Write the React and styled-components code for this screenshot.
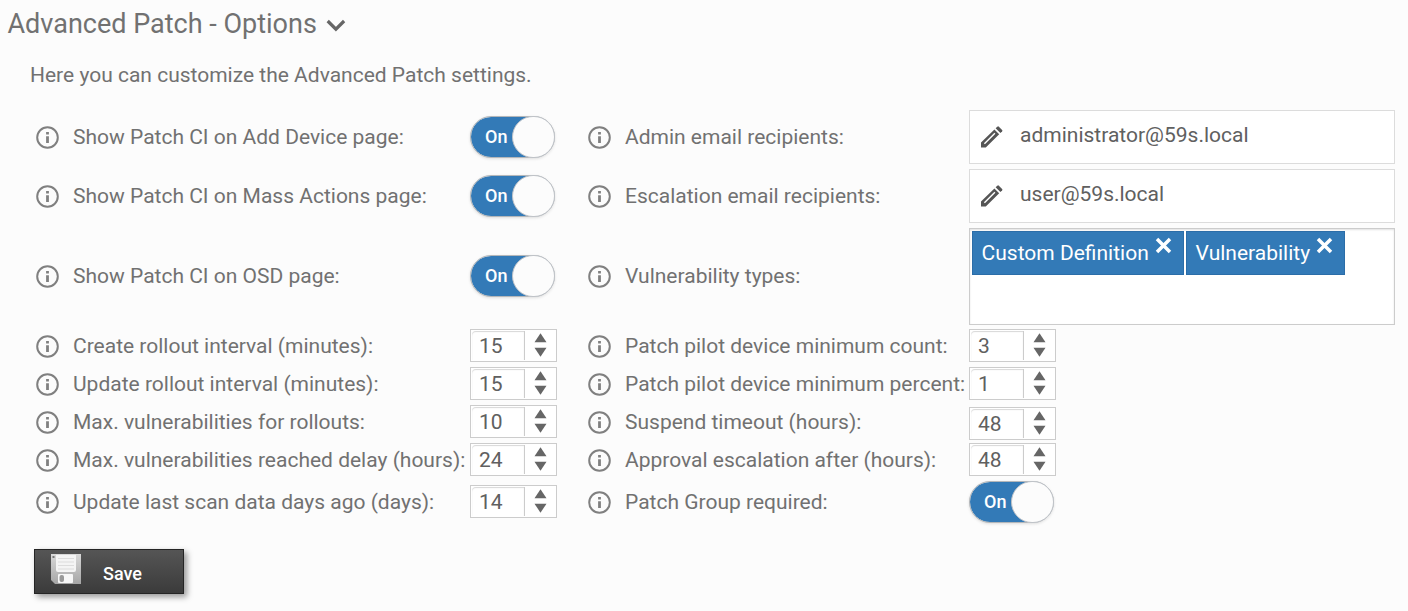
import React, { useState } from "react";
import styled, { createGlobalStyle } from "styled-components";

const GlobalStyle = createGlobalStyle`
  body {
    margin: 0;
    background: #fcfcfc;
    color: #717171;
    font-family: Roboto, "Liberation Sans", sans-serif;
    font-size: 21px;
  }
  * {
    box-sizing: border-box;
  }
`;

const Page = styled.main`
  height: 611px;
  overflow: hidden;
`;

const Title = styled.h1`
  display: flex;
  align-items: center;
  gap: 9px;
  margin: 0;
  padding: 8px 0 0 7.5px;
  font-size: 27px;
  line-height: 32px;
  font-weight: 400;

  svg {
    margin-top: 3px;
  }
`;

const Intro = styled.p`
  margin: 0;
  padding: 21px 0 0 30px;
  line-height: 28px;
  height: 70px;
`;

// two settings per line: icon + label + control, twice
const Options = styled.div`
  display: grid;
  grid-template-columns: 434px 118px 381px 426px;
  grid-template-rows: 54px 54px 96px repeat(4, 33px) 42px;
  row-gap: 5px;
  align-items: center;
  padding-left: 36px;
`;

const LabelCell = styled.div`
  display: flex;
  align-items: center;
  gap: 14px;
  white-space: nowrap;
  line-height: 24px;
`;

const Control = styled.div`
  display: flex;
  padding-top: ${props => props.$drop || 0}px;
`;

const InfoSvg = styled.svg`
  flex: none;
  width: 23px;
  height: 23px;
  margin-top: 1px;
`;

const ToggleTrack = styled.button`
  display: flex;
  align-items: center;
  justify-content: space-between;
  width: 85px;
  height: 42px;
  padding: 0 0 0 14px;
  border: 1px solid #b4b7ba;
  border-radius: 21px;
  background: ${props => (props.$on ? "#337ab7" : "#ddd")};
  background-clip: padding-box;
  box-shadow: 0 1px 3px rgba(0, 0, 0, 0.12);
  color: #fff;
  font-family: inherit;
  font-size: 18px;
  font-weight: 500;
`;

const ToggleText = styled.span`
  padding-bottom: 2px;
`;

const Knob = styled.span`
  width: 43px;
  height: 42px;
  margin-right: -1px;
  flex: none;
  border: 1px solid #bfc3c8;
  border-radius: 21px;
  background: #fcfcfc;
`;

const EmailBox = styled.div`
  display: flex;
  align-items: center;
  gap: 17px;
  width: 426px;
  height: 54px;
  padding: 0 0 5px 11px;
  border: 1px solid #dcdcdc;
  background: #fff;
  color: #606060;

  svg {
    margin-top: 4px;
  }
`;

const TagBox = styled.div`
  display: flex;
  align-items: flex-start;
  gap: 2px;
  width: 426px;
  height: 97px;
  margin-bottom: -1px;
  padding: 2px;
  border: 1px solid #ccc;
  background: #fff;
  box-shadow: inset 0 1px 2px rgba(0, 0, 0, 0.12);
`;

const Tag = styled.span`
  display: flex;
  gap: 6px;
  width: ${props => props.$width}px;
  height: 44px;
  padding-left: 8.6px;
  border: 1px solid #2b6da8;
  background: #337ab7;
  color: #fff;
  line-height: 42px;
  white-space: nowrap;

  svg {
    flex: none;
    margin-top: 5px;
  }
`;

const SpinnerBox = styled.div`
  display: flex;
  width: 87px;
  height: 33px;
  border: 1px solid #ccc;
  background: #fff;
`;

const SpinnerInput = styled.input`
  width: 53px;
  height: 29px;
  margin: 1px 0 0 1px;
  padding: 0 0 0 7px;
  border: 0;
  border-right: 1px solid #ccc;
  border-radius: 4px 0 0 0;
  background: #fff;
  box-shadow: inset 0 1px 1px rgba(0, 0, 0, 0.16);
  color: #606060;
  font: inherit;
  outline: none;
`;

const Arrows = styled.svg`
  display: block;
  width: 13px;
  height: 24px;
  margin: 3px 0 0 9px;
  fill: #666;
`;

const SaveButton = styled.button`
  display: flex;
  align-items: center;
  gap: 22px;
  width: 150px;
  height: 45px;
  margin: 26px 0 0 34px;
  padding: 0 0 0 16px;
  border: 1px solid #252525;
  background: linear-gradient(#555, #3b3b3b);
  box-shadow: 3px 3px 6px rgba(0, 0, 0, 0.4);
  color: #fff;
  font-family: inherit;
  font-size: 18px;
  font-weight: 500;

  svg {
    margin-bottom: 5px;
  }
  span {
    padding-top: 4px;
  }
`;

const InfoIcon = () => (
  <InfoSvg viewBox="0 0 23 23" fill="none">
    <circle cx="11.5" cy="11.5" r="10.3" stroke="#808080" strokeWidth="2" />
    <path d="M11.5 10.2v6.9M11.5 6v2.4" stroke="#808080" strokeWidth="2.8" />
  </InfoSvg>
);

const PencilIcon = () => (
  <svg width="22" height="22" viewBox="0 0 22 22">
    <path
      fill="#555"
      fillRule="evenodd"
      d="M0 16.6 13.4 3.4l4.8 4.8L4.8 21.4H0zM2.9 17.3l1 1L14.4 7.8l-1-1z"
    />
    <path fill="#555" d="m14.6 2.3 1.7-1.6q.8-.7 1.6 0l3.2 3.2q.7.8 0 1.6l-1.7 1.6z" />
  </svg>
);

const CloseIcon = () => (
  <svg width="17" height="17" viewBox="0 0 17 17">
    <path d="M2 2l13 13M15 2L2 15" stroke="#fff" strokeWidth="3.5" />
  </svg>
);

const DiskIcon = () => (
  <svg width="30" height="30" viewBox="0 0 30 30">
    <defs>
      <linearGradient id="disk" x1="0" y1="0" x2="0" y2="1">
        <stop offset="0" stopColor="#d8d8d8" />
        <stop offset="1" stopColor="#a6a6a6" />
      </linearGradient>
    </defs>
    <path d="M0 0h30v30H4l-4-4z" fill="url(#disk)" />
    <path d="M5 1h20v15q0 2-2 2H7q-2 0-2-2z" fill="#f4f4f4" />
    <path d="M7 4.5h16M7 8h16M7 11.5h16M7 15h16" stroke="#dcdcdc" strokeWidth="1.2" />
    <rect x="1.5" y="2" width="2" height="2" fill="#777" />
    <rect x="7" y="20" width="15" height="9" rx="1" fill="#f7f7f7" />
    <rect x="8.5" y="21" width="4.5" height="7" rx="2" fill="#999" />
  </svg>
);

const Label = ({ children }) => (
  <LabelCell>
    <InfoIcon />
    <span>{children}</span>
  </LabelCell>
);

const Toggle = () => {
  const [on, setOn] = useState(true);
  return (
    <ToggleTrack $on={on} onClick={() => setOn(!on)}>
      <ToggleText>{on ? "On" : "Off"}</ToggleText>
      <Knob />
    </ToggleTrack>
  );
};

const Spinner = props => {
  const [value, setValue] = useState(props.value);

  return (
    <SpinnerBox>
      <SpinnerInput value={value} onChange={e => setValue(e.target.value)} />
      <Arrows viewBox="0 0 13 24">
        <path d="M.5 9.3 6.5.3l6 9z" onClick={() => setValue(Number(value) + 1)} />
        <path d="M.5 14.7l6 9 6-9z" onClick={() => setValue(Number(value) - 1)} />
      </Arrows>
    </SpinnerBox>
  );
};

const LastSpinner = styled.div`
  padding-bottom: 1px;
`;

const Email = ({ children }) => (
  <EmailBox>
    <PencilIcon />
    <span>{children}</span>
  </EmailBox>
);

// each line: left label, left control, right label, right control, offset of the right control
const rows = [
  ["Show Patch CI on Add Device page:", <Toggle />, "Admin email recipients:", <Email>administrator@59s.local</Email>],
  ["Show Patch CI on Mass Actions page:", <Toggle />, "Escalation email recipients:", <Email>user@59s.local</Email>],
  [
    "Show Patch CI on OSD page:",
    <Toggle />,
    "Vulnerability types:",
    <TagBox>
      <Tag $width={212}>Custom Definition<CloseIcon /></Tag>
      <Tag $width={159}>Vulnerability<CloseIcon /></Tag>
    </TagBox>
  ],
  ["Create rollout interval (minutes):", <Spinner value="15" />, "Patch pilot device minimum count:", <Spinner value="3" />],
  ["Update rollout interval (minutes):", <Spinner value="15" />, "Patch pilot device minimum percent:", <Spinner value="1" />],
  ["Max. vulnerabilities for rollouts:", <Spinner value="10" />, "Suspend timeout (hours):", <Spinner value="48" />, 4],
  ["Max. vulnerabilities reached delay (hours):", <Spinner value="24" />, "Approval escalation after (hours):", <Spinner value="48" />],
  [
    "Update last scan data days ago (days):",
    <LastSpinner><Spinner value="14" /></LastSpinner>,
    "Patch Group required:",
    <Toggle />
  ]
];

const App = () => {
  return (
    <Page>
      <GlobalStyle />
      <Title>
        Advanced Patch - Options
        <svg width="20" height="13" viewBox="0 0 20 13">
          <path d="M1.7 2l8.2 8.2L18.1 2" fill="none" stroke="#666" strokeWidth="3.2" />
        </svg>
      </Title>
      <Intro>Here you can customize the Advanced Patch settings.</Intro>
      <Options>
        {rows.map(([left, leftControl, right, rightControl, drop]) => (
          <React.Fragment key={left}>
            <Label>{left}</Label>
            <Control>{leftControl}</Control>
            <Label>{right}</Label>
            <Control $drop={drop}>{rightControl}</Control>
          </React.Fragment>
        ))}
      </Options>
      <SaveButton>
        <DiskIcon />
        <span>Save</span>
      </SaveButton>
    </Page>
  );
};

export default App;
